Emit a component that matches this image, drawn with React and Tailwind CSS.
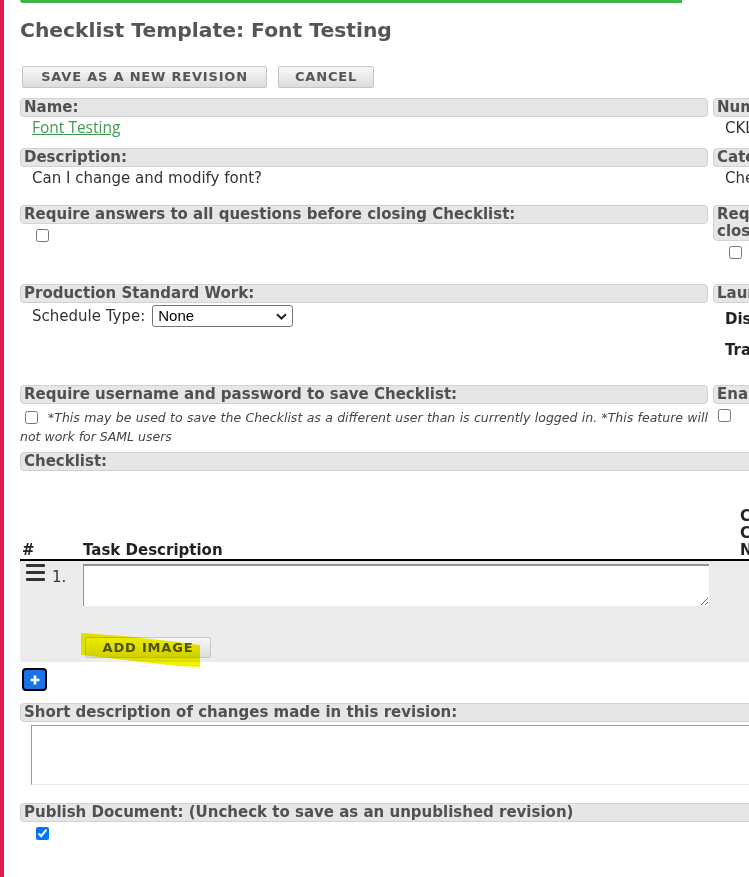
import React from "react";

const Head = ({ children, className = "" }) => (
  <div
    className={`rounded-[4px] border border-[#d2d2d2] bg-[#e6e6e6] px-[3px] text-[15px] font-bold leading-[17px] text-[#505050] ${className}`}
  >
    {children}
  </div>
);

const Box = ({ className = "", checked = false }) => (
  <input
    type="checkbox"
    defaultChecked={checked}
    className={`m-0 block size-[13px] ${className}`}
  />
);

const GreyButton = ({ children, className = "" }) => (
  <button
    className={`h-[22px] rounded-[2px] border border-[#c6c6c6] bg-linear-to-b from-[#f8f8f8] to-[#dcdcdc] text-[13px] font-bold leading-[20px] tracking-[0.8px] text-[#555] ${className}`}
  >
    {children}
  </button>
);

export default function App() {
  return (
    <div className="h-[877px] w-[749px] overflow-hidden border-l-[4px] border-[#e11b4b] bg-white font-['DejaVu_Sans',sans-serif] text-[#333]">
      <div className="w-[970px] pl-[16px]">
        {/* top progress strip */}
        <div className="h-[3px] w-[662px] rounded-bl-[3px] bg-[#3db54a]" />

        <h1 className="mt-[15px] text-[20.3px] font-bold leading-[24px] text-[#555]">
          Checklist Template: Font Testing
        </h1>

        <div className="ml-[2px] mt-[24px] flex gap-[11px]">
          <GreyButton className="w-[245px]">SAVE AS A NEW REVISION</GreyButton>
          <GreyButton className="w-[96px]">CANCEL</GreyButton>
        </div>

        {/* form rows */}
        <div className="mt-[10px] grid h-[50px] grid-cols-[688px_255px] gap-x-[5px]">
          <div>
            <Head>Name:</Head>
            <div className="mt-[1px] pl-[12px] font-['Open_Sans',sans-serif] text-[15.5px] leading-[18px]">
              <a className="text-[#3d9b4f] underline">Font Testing</a>
            </div>
          </div>
          <div>
            <Head>Number:</Head>
            <div className="mt-[2px] pl-[12px] text-[15px] leading-[18px]">CKL-000214</div>
          </div>
        </div>

        <div className="grid h-[57px] grid-cols-[688px_255px] gap-x-[5px]">
          <div>
            <Head>Description:</Head>
            <div className="mt-[2px] pl-[12px] text-[15px] leading-[18px]">
              Can I change and modify font?
            </div>
          </div>
          <div>
            <Head>Category:</Head>
            <div className="mt-[2px] pl-[12px] text-[15px] leading-[18px]">Checklists</div>
          </div>
        </div>

        <div className="grid h-[79px] grid-cols-[688px_255px] gap-x-[5px]">
          <div>
            <Head>Require answers to all questions before closing Checklist:</Head>
            <Box className="ml-[16px] mt-[5px]" />
          </div>
          <div>
            <Head className="w-[240px]">Require approval before closing Checklist:</Head>
            <Box className="ml-[16px] mt-[5px]" />
          </div>
        </div>

        <div className="grid h-[101px] grid-cols-[688px_255px] gap-x-[5px]">
          <div>
            <Head>Production Standard Work:</Head>
            <div className="mt-[2px] flex items-center gap-[7px] pl-[12px] text-[15px] leading-[18px]">
              <span>Schedule Type:</span>
              <div className="relative h-[22px] w-[141px]">
                <select className="h-[22px] w-[141px] appearance-none rounded-[3px] border border-[#767676] bg-white pl-[5px] font-['Liberation_Sans',sans-serif] text-[15px] leading-[20px] text-black">
                  <option>None</option>
                </select>
                <svg
                  className="pointer-events-none absolute right-[6px] top-[8px]"
                  width="11"
                  height="7"
                  viewBox="0 0 11 7"
                >
                  <path d="M1 1.2l4.5 4.3 4.5-4.3" fill="none" stroke="#222" strokeWidth="2" />
                </svg>
              </div>
            </div>
          </div>
          <div>
            <Head>Launch Settings:</Head>
            <div className="mt-[7px] flex flex-col gap-[13px] pl-[12px] text-[15px] font-bold leading-[18px] text-[#222]">
              <span>Display Options</span>
              <span>Training Required</span>
            </div>
          </div>
        </div>

        <div className="grid h-[67px] grid-cols-[688px_255px] gap-x-[5px]">
          <div>
            <Head>Require username and password to save Checklist:</Head>
            <p className="mt-[4px] text-justify text-[12.5px] italic leading-[19px] text-[#444]">
              <input
                type="checkbox"
                className="m-0 ml-[5px] mr-[10px] inline-block size-[13px] align-[-2px]"
              />
              *This may be used to save the Checklist as a different user than is currently
              logged in. *This feature will not work for SAML users
            </p>
          </div>
          <div>
            <Head>Enable Kiosk Mode:</Head>
            <Box className="ml-[5px] mt-[5px]" />
          </div>
        </div>

        <Head className="w-[948px]">Checklist:</Head>

        {/* task table */}
        <div className="grid h-[90px] grid-cols-[63px_657px_228px] items-end border-b-2 border-black text-[15px] font-bold leading-[17px] text-[#222]">
          <div className="pl-[2px]">#</div>
          <div>Task Description</div>
          <div>
            Check
            <br />
            Complete
            <br />
            Notes
          </div>
        </div>

        <div className="grid h-[101px] grid-cols-[63px_657px_228px] bg-[#ececec]">
          <div className="flex items-start">
            <div className="ml-[6px] mt-[3px] flex flex-col gap-[4px]">
              <span className="h-[3px] w-[19px] rounded-[1px] bg-[#333]" />
              <span className="h-[3px] w-[19px] rounded-[1px] bg-[#333]" />
              <span className="h-[3px] w-[19px] rounded-[1px] bg-[#333]" />
            </div>
            <span className="ml-[7px] mt-[7px] text-[15px] leading-[18px] text-[#333]">1.</span>
          </div>
          <div>
            <textarea className="mt-[3px] block h-[42px] w-[626px] border-0 border-l border-t-2 border-[#949494] bg-white" />
            <div className="relative ml-[2px] mt-[31px] w-[126px]">
              <GreyButton className="block w-[126px] !h-[21px] !leading-[19px]">ADD IMAGE</GreyButton>
              {/* highlighter mark */}
              <svg
                className="pointer-events-none absolute left-[-6px] top-[-6px] mix-blend-multiply"
                width="130"
                height="40"
                viewBox="0 0 130 40"
              >
                <polygon
                  points="2,2 30,4 54,6 90,10 121,14 121,36 98,35 64,31 30,27 2,24"
                  fill="#f2f200"
                />
              </svg>
            </div>
          </div>
          <div />
        </div>

        <button className="ml-[2px] mt-[6px] flex h-[23px] w-[25px] items-center justify-center rounded-[4px] border-2 border-black bg-[#1a73e8]">
          <svg width="10" height="10" viewBox="0 0 10 10">
            <path d="M5 0.5v9M0.5 5h9" stroke="#fff" strokeWidth="2.6" />
          </svg>
        </button>

        <Head className="mt-[12px] w-[948px]">Short description of changes made in this revision:</Head>
        <textarea className="ml-[11px] mt-[3px] block h-[60px] w-[920px] border-0 border-b border-l border-t border-b-[#e6e6e6] border-l-[#9a9a9a] border-t-[#9a9a9a] bg-white" />

        <Head className="mt-[18px] w-[948px]">
          Publish Document: (Uncheck to save as an unpublished revision)
        </Head>
        <Box checked className="ml-[16px] mt-[5px]" />
      </div>
    </div>
  );
}
